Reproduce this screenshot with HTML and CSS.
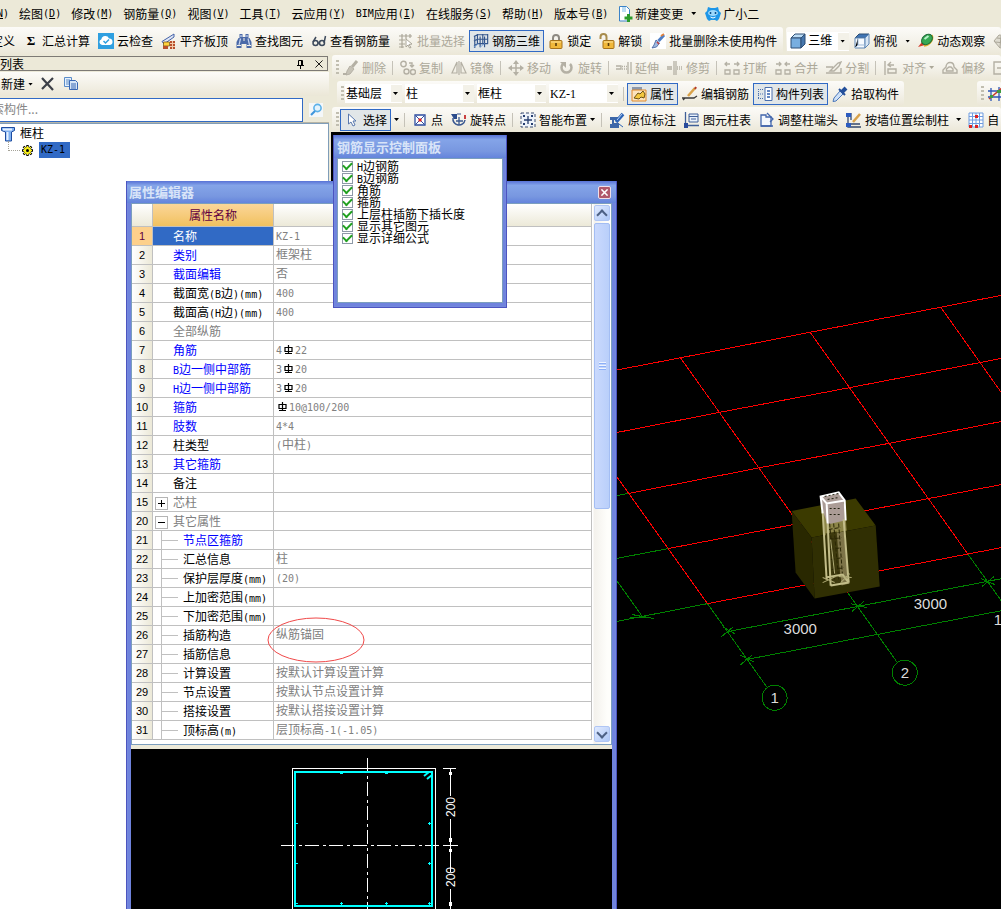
FILE: index.html
```html
<!DOCTYPE html>
<html lang="zh-CN">
<head>
<meta charset="utf-8">
<title>钢筋三维</title>
<link rel="stylesheet" href="styles.css">
</head>
<body>
<svg class="defs" aria-hidden="true">
  <symbol id="check-cloud" viewBox="0 0 16 16"><path fill="#2f9fe0" d="M0 0h16v16H0z"/><path fill="#fff" d="M4 12a3 3 0 0 1-.6-5.800A4 4 0 0 1 11 5.500 3.300 3.300 0 0 1 12 12z"/><path fill="none" stroke="#2f9fe0" stroke-width="1.500" d="M5.500 8l2 2L11 6.500"/></symbol>
  <symbol id="slab" viewBox="0 0 16 16"><path fill="#dfe6f5" stroke="#4462a8" d="M1 8.500L13 1v3L3 11z"/><path fill="#ffd23c" stroke="#6b4a12" stroke-width=".7" d="M2.500 9h6v4h-6z"/><path fill="#b8502c" d="M9 8h5v8H9zM2 13h5v3H2z"/><path stroke="#f1c9a8" d="M9 10.500h5M9 13.500h5M11.500 8v8"/></symbol>
  <symbol id="binoc" viewBox="0 0 16 16"><path fill="#4a69a8" d="M3.500 1h3v3h3V1h3v4h1l2 4v6h-5v-4h-5v4h-5V9l2-4h1z"/><path stroke="#c6d4ef" stroke-width="1.200" d="M4.500 5.500L3 12m9-6.500l1.500 6.500M5 2v2m6-2v2"/><path stroke="#f3f0e4" d="M8 5v3M1 12.500h4m6 0h4"/></symbol>
  <symbol id="glasses" viewBox="0 0 16 16"><g fill="none" stroke="#3d4a5c" stroke-width="1.500"><circle cx="4.500" cy="10" r="2.500"/><circle cx="11" cy="10" r="2.500"/><path d="M2 9l3-5M13 10l1.500-7M7 10h2"/></g></symbol>
  <symbol id="batch" viewBox="0 0 16 16"><g fill="none" stroke="#aaa698" stroke-width="1.200"><path d="M1 3h13M1 7h6M1 11h6M4 1v14M8 1v5M12 1v4M1 14h5"/></g><path fill="#fff" stroke="#aaa698" d="M8 6l6 5-3 .5 2 3-1.500.5-1.500-3-2 2z"/></symbol>
  <symbol id="grid3d" viewBox="0 0 18 18"><g fill="none" stroke="#33558c" stroke-width="1.300"><path d="M1 4l4-2h12M1 9l4-2h12M1 15l4-3h12M5 1v12M11 1v12M16.500 1v11M2 4v13M8 4v12M13 4v12"/></g><path stroke="#7aa7df" d="M1 16l5-4m2 4l5-4"/></symbol>
  <symbol id="lock" viewBox="0 0 16 16"><path fill="none" stroke="#8e8a82" stroke-width="2" d="M5 8V5a3 3 0 0 1 6 0v3"/><rect x="2" y="7.500" width="12" height="8" rx="1" fill="#f1b83a" stroke="#a5711a"/><path stroke="#fbe09a" d="M3 9h10"/><path stroke="#5b3c0b" stroke-width="1.600" d="M8 10v3"/></symbol>
  <symbol id="unlock" viewBox="0 0 16 16"><path fill="none" stroke="#a88c4c" stroke-width="2" d="M1.500 6V4a3 3 0 0 1 6 0v4"/><rect x="4" y="7.500" width="11" height="8" rx="1" fill="#f1b83a" stroke="#a5711a"/><path stroke="#fbe09a" d="M5 9h9"/><path stroke="#5b3c0b" stroke-width="1.600" d="M9.500 10v3"/></symbol>
  <symbol id="brush" viewBox="0 0 16 16"><path fill="#fff" d="M0 0h16v16H0z"/><path stroke="#4d7ec6" stroke-width="3" d="M8.500 8L14 2"/><path stroke="#e0823c" stroke-width="2" d="M11 3l3-2"/><path fill="#9fb9e0" stroke="#3c5d9c" stroke-width=".8" d="M6 7l3.500 3-3 4-4.500 1 2-3z"/><path stroke="#c83a3a" stroke-width="1.500" d="M7 9l2 2"/></symbol>
  <symbol id="cube" viewBox="0 0 16 16"><path fill="#bcdcf5" stroke="#2f4f74" d="M1 5l4-4h10l-4 4z"/><path fill="#78aee0" stroke="#2f4f74" d="M1 5h10v10H1z"/><path fill="#4777ad" stroke="#2f4f74" d="M11 5l4-4v10l-4 4z"/></symbol>
  <symbol id="topview" viewBox="0 0 16 16"><path fill="#3f74b4" stroke="#2f4f74" d="M1 5l4-4h10l-4 4z"/><path fill="#f6fafe" stroke="#5e86b4" d="M1 5h10v10H1z"/><path fill="#d7e6f5" stroke="#5e86b4" d="M11 5l4-4v10l-4 4z"/><path stroke="#9db9d8" d="M4 5v7l-3 3m3-3h7"/></symbol>
  <symbol id="orbit" viewBox="0 0 16 16"><path fill="none" stroke="#e3b22c" stroke-width="1.500" d="M14 2c2 4-1 10-8 11"/><path fill="#d43a2a" d="M0 14l4-5 3 3z"/><ellipse cx="9" cy="6.500" rx="6" ry="4.500" transform="rotate(-40 9 6.500)" fill="#35a853" stroke="#1d6b38"/><path stroke="#b6f2c7" stroke-width="2" d="M6.500 6l4-3"/></symbol>
  <symbol id="orbit-off" viewBox="0 0 16 16"><path fill="#dedbd0" stroke="#aaa698" d="M1 8l5-6 9 1v9l-8 3zM4 5l9 1M2 9l10 1M8 3l-1 11"/></symbol>
  <symbol id="doc-new" viewBox="0 0 16 16"><path fill="#fff" stroke="#3b83c8" d="M2.500.5h7l3 3V15h-10z"/><path fill="#bcdcf4" d="M5 1h4v5H5z"/><path stroke="#2c9b2c" stroke-width="3" d="M11.500 8v8M7.500 12h8"/></symbol>
  <symbol id="robot" viewBox="0 0 16 16"><path fill="#1d96e8" d="M3 1l3 1h4l3-1 1 4 2 2-1 3-1 3-2 2-2-1H6l-2 1-2-2-1-3-1-3 2-2z"/><ellipse cx="8" cy="7" rx="5" ry="3" fill="#9bd7fb"/><path stroke="#0b4f8c" stroke-width="1.500" d="M5.500 6v2m5-2v2"/><path fill="none" stroke="#fff" d="M5.500 11q2.500 2 5 0"/></symbol>
  <symbol id="erase" viewBox="0 0 16 16"><path stroke="#b4b0a4" stroke-width="3" d="M9 7l5-6"/><path fill="#c6c2b6" stroke="#b4b0a4" d="M7 6l4 3-4 5-4 1 1-4z"/><path stroke="#b4b0a4" stroke-width="2" d="M0 14h4"/></symbol>
  <symbol id="copy-off" viewBox="0 0 16 16"><g fill="none" stroke="#b4b0a4" stroke-width="1.400"><circle cx="3.500" cy="4" r="2.700"/><circle cx="6.500" cy="11.500" r="2.500"/><circle cx="13" cy="12" r="2.500"/><path d="M9 3h3v3m-2-1l2 2 2-2"/></g></symbol>
  <symbol id="mirror" viewBox="0 0 16 16"><g fill="none" stroke="#b4b0a4" stroke-width="1.200"><path d="M6 2v11H1zM10 2v11h5zM8 1v14"/></g></symbol>
  <symbol id="move" viewBox="0 0 16 16"><path stroke="#b4b0a4" stroke-width="1.500" d="M8 2v12M2 8h12"/><path fill="#b4b0a4" d="M8 0l3 4H5zM8 16l3-4H5zM0 8l4-3v6zM16 8l-4-3v6z"/></symbol>
  <symbol id="rotate" viewBox="0 0 16 16"><path fill="none" stroke="#b4b0a4" stroke-width="2.500" d="M4 4a5 5 0 1 0 7 0"/><path fill="#b4b0a4" d="M1 2h6v6z"/></symbol>
  <symbol id="extend" viewBox="0 0 16 16"><g fill="none" stroke="#b4b0a4" stroke-width="1.300"><path d="M0 6h5v3H0M12 2v12M15 2v12"/><path stroke-dasharray="1 1" d="M6 6.500h5M6 9h5"/></g></symbol>
  <symbol id="trim" viewBox="0 0 16 16"><g fill="none" stroke="#b4b0a4" stroke-width="1.300"><path d="M0 7h5M0 9h5M7 1v14M9 1v14"/><path stroke-dasharray="1 1" d="M10 7h6M10 9h6"/></g></symbol>
  <symbol id="break" viewBox="0 0 16 16"><g fill="none" stroke="#b4b0a4" stroke-width="1.300"><path d="M1 4h5M10 4h5M3 2L1 4l2 2M13 2l2 2-2 2M1 14v-4h5v4zM10 14v-4h5v4z"/></g></symbol>
  <symbol id="merge" viewBox="0 0 16 16"><g fill="none" stroke="#b4b0a4" stroke-width="1.300"><path d="M1 4h5M10 4h5M4 2l2 2-2 2M12 2l-2 2 2 2M1 14v-4h5v4zM10 14v-4h5v4z"/></g></symbol>
  <symbol id="split" viewBox="0 0 16 16"><path fill="none" stroke="#b4b0a4" stroke-width="1.400" d="M0 7h7M0 13h15V8M4 11l8-8 3-1-2 4-5 5z"/></symbol>
  <symbol id="align" viewBox="0 0 16 16"><path fill="none" stroke="#b4b0a4" stroke-width="1.400" d="M2 1v14M5 9h8v4H5zM5 5h6M8 2L5 5l3 2"/></symbol>
  <symbol id="offset" viewBox="0 0 16 16"><path fill="none" stroke="#b4b0a4" stroke-width="1.400" d="M1 13v-3l3-3c0-6 8-6 8 0l3 3v3zM4.500 11V9L7 7h2l2 2v2z"/></symbol>
  <symbol id="square-off" viewBox="0 0 16 16"><path fill="none" stroke="#b4b0a4" stroke-width="1.400" d="M8 2H1v12h7M4 8h9"/></symbol>
  <symbol id="prop" viewBox="0 0 16 16"><path fill="#8b97ab" d="M1 1h10v3H1z"/><path fill="#fbe3bd" stroke="#e08a2c" d="M1 4h14v11H1z"/><path fill="#f3c73e" stroke="#6d5314" d="M3 12l4-5 2 1 3-3 2 3-1 4-3-1-2 2z"/></symbol>
  <symbol id="editbar" viewBox="0 0 16 16"><path fill="none" stroke="#3a3a3a" stroke-width="1.300" d="M0 12h12l3-2M1 14l2-2"/><path stroke="#d9a24a" stroke-width="2.500" d="M6 10l7-8"/><path stroke="#b33a2a" stroke-width="2" d="M13 3l1-2"/></symbol>
  <symbol id="list" viewBox="0 0 16 16"><path fill="#fff" stroke="#4a6fae" d="M8 1.500h7v13H8z"/><path stroke="#4a6fae" stroke-dasharray="1 1" d="M1 3.500h6M1 8h6M1 12.500h6M1.500 3v10"/><path stroke="#3260ae" stroke-width="1.500" d="M10 5h3M10 8h3M10 11h3"/></symbol>
  <symbol id="dropper" viewBox="0 0 16 16"><path fill="#cfe1f7" stroke="#4a76b9" d="M8 5l3 3-7 7-3 .5L2 12z"/><path stroke="#24509b" stroke-width="4" d="M9.500 6.500L14 2"/><path stroke="#24509b" stroke-width="2" d="M7 3l6 6"/></symbol>
  <symbol id="axis" viewBox="0 0 16 16"><path stroke="#2c55b6" stroke-width="1.300" d="M3 2v13M11 1v14M0 5h16M0 11h16"/><path stroke="#c43a2a" stroke-width="1.500" d="M1 13L14 2"/><path fill="#3f9a3f" d="M9 4h4v3H9zM2 9h3v3H2z"/></symbol>
  <symbol id="cursor" viewBox="0 0 16 16"><path fill="#fff" stroke="#5878ae" d="M4.500 2v10l2.500-2 2 4 2-1-2-4h3z"/></symbol>
  <symbol id="point" viewBox="0 0 16 16"><path fill="#fff" stroke="#2c4ca0" stroke-width="1.300" d="M3 3h10v10H3z"/><path stroke="#2c4ca0" d="M4 4l8 8M12 4l-8 8"/><path fill="#d22" d="M6.500 6.500h3v3h-3z"/></symbol>
  <symbol id="rotpoint" viewBox="0 0 16 16"><path fill="none" stroke="#3a5890" stroke-width="1.500" d="M2 6a6 6 0 1 0 12 2"/><path stroke="#3a5890" stroke-width="1.300" d="M8 5v8M5 9h7"/><path fill="#2c4c8c" d="M0 2h6v5H3z"/><path fill="none" stroke="#3a5890" d="M6 2h4"/><path stroke="#c94040" stroke-width="2" d="M14 3v4"/></symbol>
  <symbol id="smart" viewBox="0 0 16 16"><path fill="#eef3fa" stroke="#3a4c70" stroke-dasharray="3 2" d="M1 1h14v14H1z"/><path stroke="#273f70" stroke-width="1.300" d="M8 4v8M4 8h8"/><path fill="#273f70" d="M3 3h2v2H3zM11 3h2v2h-2zM3 11h2v2H3zM11 11h2v2h-2z"/></symbol>
  <symbol id="mark" viewBox="0 0 16 16"><path fill="#3d67a8" d="M1 5h8v3H5v3h5v5H1v-4h2V8H1z"/><path stroke="#2c63b6" stroke-width="3.500" d="M7 10l7-8"/><path stroke="#bcd4f4" d="M8 8l5-6"/><path stroke="#2c63b6" d="M10 12l4 3"/></symbol>
  <symbol id="coltable" viewBox="0 0 16 16"><path fill="none" stroke="#3f5f98" stroke-width="1.300" d="M1.500 0v15M0 13.500h15"/><path fill="#e8f0fa" stroke="#3f5f98" d="M5 2h9v8H5z"/><path stroke="#3f5f98" d="M5 4.500h9M7 7h5"/><path fill="#284a9b" d="M0 11h4v5H0z"/></symbol>
  <symbol id="colend" viewBox="0 0 16 16"><path fill="#f4f8fd" stroke="#4266ac" stroke-width="1.300" d="M2 3h5v2h5v9H2z"/><path fill="none" stroke="#4266ac" stroke-width="1.300" d="M8 1l6 6-3 3M2 14h12"/></symbol>
  <symbol id="wallcol" viewBox="0 0 16 16"><path fill="none" stroke="#33486e" stroke-width="1.300" d="M2 1v14h13M5 1v7M5 12h9"/><path fill="#2c5cc0" d="M0 1h5v4H0zM0 11h5v4H0z"/><path stroke="#d9a24a" stroke-width="2.500" d="M7 10l7-8"/></symbol>
  <symbol id="dotgrid" viewBox="0 0 16 16"><path fill="#fff" stroke="#6f9ce0" d="M1 1h14v14H1zM4.500 1v14M8 1v14M11.500 1v14M1 4.500h14M1 8h14M1 11.500h14"/><path fill="#d22" d="M7 3h3v3H7zM1 13h3v3H1zM7 13h3v3H7z"/></symbol>
  <symbol id="del" viewBox="0 0 14 14"><path stroke="#3c4048" stroke-width="2.200" d="M1 1l11 12M12 1L1 12"/></symbol>
  <symbol id="copy" viewBox="0 0 16 16"><path fill="#e6f0fb" stroke="#5a8cc9" d="M1.500 1.500h7v9h-7z"/><path stroke="#5a8cc9" d="M3 4h4M3 6h4M3 8h4"/><path fill="#d6e6f8" stroke="#3a68b4" d="M6.500 4.500h6l2 2v7h-8z"/><path stroke="#3a68b4" d="M8 8h5M8 10h5M8 12h5"/></symbol>
  <symbol id="search" viewBox="0 0 14 14"><path fill="#f4f7f9" d="M0 0h14v14H0z"/><circle cx="8.500" cy="5" r="3.600" fill="#e3f3fd" stroke="#5cb1e8" stroke-width="1.600"/><path stroke="#3f96dc" stroke-width="2.200" d="M6 8l-4 4"/></symbol>
  <symbol id="pin" viewBox="0 0 9 10"><path fill="none" stroke="#000" d="M2.500 6V1.500h4V6M5.500 1v5M1 6.500h7M4.500 7v3"/></symbol>
  <symbol id="column" viewBox="0 0 14 15"><path fill="#7fb0f0" stroke="#1e4ca0" d="M.5.500h13v3l-3 1.500v9h-6V5l-4-1.500z"/><path stroke="#e4f0ff" stroke-width="2" d="M2 2.500h9M6.500 5v8"/></symbol>
  <symbol id="gear" viewBox="0 0 11 11"><path stroke="#000" stroke-width="2.400" d="M5.500 0v11M0 5.500h11M1.500 1.500l8 8M9.500 1.500l-8 8"/><circle cx="5.500" cy="5.500" r="3.600" fill="#f7ee1c"/><path stroke="#f7ee1c" d="M5.500 1v9M1 5.500h9M2 2l7 7M9 2L2 9"/><circle cx="5.500" cy="5.500" r="1.500" fill="#000"/></symbol>
  <symbol id="cross" viewBox="0 0 9 9"><path stroke="currentColor" stroke-width="var(--w)" d="M.5.500l8 8M8.500.500l-8 8"/></symbol>
  <symbol id="bar" viewBox="0 0 9 10"><path fill="none" stroke="#000" stroke-width="1.200" d="M4.500 0v9M1 2.500h7v4H1zM1 8.500h7"/></symbol>
</svg>

<div class="app">
  <nav class="menubar" aria-label="菜单">
    <a href="#"><span class="n"><u>N</u>)</span></a>
    <a href="#">绘图<span class="n">(<u>D</u>)</span></a>
    <a href="#">修改<span class="n">(<u>M</u>)</span></a>
    <a href="#">钢筋量<span class="n">(<u>Q</u>)</span></a>
    <a href="#">视图<span class="n">(<u>V</u>)</span></a>
    <a href="#">工具<span class="n">(<u>T</u>)</span></a>
    <a href="#">云应用<span class="n">(<u>Y</u>)</span></a>
    <a href="#"><span class="n">BIM</span>应用<span class="n">(<u>I</u>)</span></a>
    <a href="#">在线服务<span class="n">(<u>S</u>)</span></a>
    <a href="#">帮助<span class="n">(<u>H</u>)</span></a>
    <a href="#">版本号<span class="n">(<u>B</u>)</span></a>
    <a href="#"><svg class="ic"><use href="#doc-new"/></svg>新建变更<b class="arrow wide"></b></a>
    <a href="#"><svg class="ic"><use href="#robot"/></svg>广小二</a>
  </nav>

  <div class="toolrow">
    <div class="toolbar lead">
      <button class="btn">定义</button>
      <button class="btn"><span class="sigma">Σ</span>汇总计算</button>
      <button class="btn"><svg class="ic"><use href="#check-cloud"/></svg>云检查</button>
      <button class="btn"><svg class="ic"><use href="#slab"/></svg>平齐板顶</button>
      <button class="btn"><svg class="ic"><use href="#binoc"/></svg>查找图元</button>
      <button class="btn"><svg class="ic"><use href="#glasses"/></svg>查看钢筋量</button>
      <button class="btn off"><svg class="ic"><use href="#batch"/></svg>批量选择</button>
      <button class="btn on"><svg class="ic"><use href="#grid3d"/></svg>钢筋三维</button>
      <button class="btn"><svg class="ic"><use href="#lock"/></svg>锁定</button>
      <button class="btn"><svg class="ic"><use href="#unlock"/></svg>解锁</button>
      <button class="btn"><svg class="ic"><use href="#brush"/></svg>批量删除未使用构件</button>
    </div>
    <div class="toolbar grow">
      <div class="combo view"><svg class="ic"><use href="#cube"/></svg><select aria-label="视图模式"><option>三维</option></select></div>
      <button class="btn"><svg class="ic"><use href="#topview"/></svg>俯视<b class="arrow wide"></b></button>
      <button class="btn"><svg class="ic"><use href="#orbit"/></svg>动态观察</button>
      <button class="btn off" aria-label="旋转视图"><svg class="ic"><use href="#orbit-off"/></svg></button>
    </div>
  </div>

  <div class="work">
    <aside class="side">
      <header class="side-head"><h2>列表</h2><svg class="pin"><use href="#pin"/></svg><button class="x" aria-label="关闭"><svg><use href="#cross"/></svg></button></header>
      <div class="side-tools">
        <button class="btn">新建<b class="arrow wide"></b></button>
        <button class="btn" aria-label="删除"><svg class="ic small"><use href="#del"/></svg></button>
        <button class="btn" aria-label="复制"><svg class="ic"><use href="#copy"/></svg></button>
      </div>
      <div class="search"><input type="text" aria-label="搜索构件" placeholder="索构件..."><button aria-label="搜索"><svg class="ic small"><use href="#search"/></svg></button></div>
      <ul class="tree">
        <li><svg class="col"><use href="#column"/></svg>框柱
          <ul><li><svg class="gear"><use href="#gear"/></svg><span class="picked n">KZ-1</span></li></ul>
        </li>
      </ul>
    </aside>

    <main class="main">
      <div class="toolrow">
        <div class="toolbar grow edit">
          <i class="grip"></i>
          <button class="btn off"><svg class="ic"><use href="#erase"/></svg>删除</button><i class="sep"></i>
          <button class="btn off"><svg class="ic"><use href="#copy-off"/></svg>复制</button>
          <button class="btn off"><svg class="ic"><use href="#mirror"/></svg>镜像</button><i class="sep"></i>
          <button class="btn off"><svg class="ic"><use href="#move"/></svg>移动</button>
          <button class="btn off"><svg class="ic"><use href="#rotate"/></svg>旋转</button><i class="sep"></i>
          <button class="btn off"><svg class="ic"><use href="#extend"/></svg>延伸</button>
          <button class="btn off"><svg class="ic"><use href="#trim"/></svg>修剪</button><i class="sep"></i>
          <button class="btn off"><svg class="ic"><use href="#break"/></svg>打断</button>
          <button class="btn off"><svg class="ic"><use href="#merge"/></svg>合并</button>
          <button class="btn off"><svg class="ic"><use href="#split"/></svg>分割</button><i class="sep"></i>
          <button class="btn off"><svg class="ic"><use href="#align"/></svg>对齐<b class="arrow"></b></button>
          <button class="btn off"><svg class="ic"><use href="#offset"/></svg>偏移</button>
          <button class="btn off" aria-label="拉伸"><svg class="ic"><use href="#square-off"/></svg></button>
        </div>
      </div>
      <div class="toolrow">
        <div class="toolbar pick">
          <i class="grip"></i>
          <div class="combo w1"><select aria-label="楼层"><option>基础层</option></select></div>
          <div class="combo w2"><select aria-label="构件类型"><option>柱</option></select></div>
          <div class="combo w2"><select aria-label="构件类别"><option>框柱</option></select></div>
          <div class="combo w2"><select aria-label="构件"><option>KZ-1</option></select></div>
          <i class="sep"></i>
          <button class="btn on"><svg class="ic"><use href="#prop"/></svg>属性</button>
          <button class="btn"><svg class="ic"><use href="#editbar"/></svg>编辑钢筋</button>
          <button class="btn on"><svg class="ic"><use href="#list"/></svg>构件列表</button>
          <button class="btn"><svg class="ic"><use href="#dropper"/></svg>拾取构件</button>
        </div>
        <div class="toolbar tail"><i class="grip"></i><button class="btn" aria-label="轴线"><svg class="ic"><use href="#axis"/></svg></button></div>
      </div>
      <div class="toolrow">
        <div class="toolbar grow draw">
          <i class="grip"></i>
          <button class="btn on"><svg class="ic"><use href="#cursor"/></svg>选择</button>
          <button class="btn drop" aria-label="选择方式"><b class="arrow"></b></button><i class="sep"></i>
          <button class="btn"><svg class="ic"><use href="#point"/></svg>点</button>
          <button class="btn"><svg class="ic"><use href="#rotpoint"/></svg>旋转点</button><i class="sep"></i>
          <button class="btn"><svg class="ic"><use href="#smart"/></svg>智能布置<b class="arrow"></b></button><i class="sep"></i>
          <button class="btn"><svg class="ic"><use href="#mark"/></svg>原位标注</button>
          <button class="btn"><svg class="ic"><use href="#coltable"/></svg>图元柱表</button>
          <button class="btn"><svg class="ic"><use href="#colend"/></svg>调整柱端头</button>
          <button class="btn"><svg class="ic"><use href="#wallcol"/></svg>按墙位置绘制柱</button>
          <button class="btn drop" aria-label="绘制方式"><b class="arrow"></b></button>
          <button class="btn"><svg class="ic"><use href="#dotgrid"/></svg>自</button>
        </div>
      </div>
      <section class="canvas" aria-label="三维视图">
        <svg viewBox="331 133 670 776" preserveAspectRatio="xMinYMin slice">
          <g class="axis-red">
            <path d="M500 393L680 358.500L809.500 333L940 308L1001 296M500 456L719 413L848 388.500L978 363.500L1001 359M628 494L758 468.500L888 444L1001 422M668 549L1001 485M707 604L1001 548"/>
            <path d="M617 478L707 604M680 358.500L857 607M809.500 333L967 554.500M940 308L1001 394"/>
          </g>
          <g class="axis-green">
            <path d="M600 499L628 494M600 562L668 549M600 625L707 604M707 604L766 687M847 593L896 662M967 554.500L1001 602M600 558L642 617"/>
            <path d="M727 632L1001 579M745 660L1001 611M632 615l22 4M630 618h18M721 637l12-10M722 627l12 7M851 612l12-10M850 604l16 4M981 587l12-10M980 579l14 6M740 665l12-10M739 655l14 7"/>
            <circle cx="774" cy="698" r="12.500"/><circle cx="904" cy="673" r="12.500"/>
          </g>
          <g><path fill="#3b3a00" d="M791 511.500L855 499L875 526L811 538z"/><path fill="#292800" d="M791 511.500L811 538L814 599L795 573z"/><path fill="#302f03" d="M811 538L875 526L879 587L814 599z"/></g>
          <g>
            <path fill="#7d7448" d="M834 534l9-2 6 52-8 2z"/><path fill="#8c8548" d="M822 510l22-6 2 27-22 5z"/>
            <path fill="#3e3a0e" d="M825 534l11-2 4 53-10 3z"/>
            <path fill="#ab9c96" d="M820 497l19-4 4 8 1 20-17 4-5-14z"/>
            <path stroke="#2b2705" stroke-dasharray="4 2" d="M829 524l5 56M833 524l5 56M838 524l4 54M828 530l12-2M829 540l12-2M829 550l12-2M830 560l12-2M831 570l12-2"/>
            <path stroke="#c2bd88" stroke-width="2" fill="none" d="M822 512l4 68M827 524l3 62M843 520l5 63M830 586l18-3M825 578l17-3 6 8"/>
            <path stroke="#b0ab76" d="M822 578l12 5M822 583l13-6M838 577l13 1M840 583l9-9M830 540l4 34"/>
            <path stroke="#fff" stroke-width="2" fill="none" d="M822 514l-2-17 18-4 6 8 1 20M820 497l6 7 18-3M826 504l1 20"/>
            <path stroke="#221" stroke-dasharray="2 2" d="M824 497l14-3M827 500l11-2M829 509h11M829 515h10"/>
          </g>
          <g class="dims"><text x="783" y="634">3000</text><text x="913" y="609">3000</text><text x="993" y="625">1</text><text x="770" y="703">1</text><text x="900" y="678">2</text></g>
        </svg>
      </section>
    </main>
  </div>
</div>

<section class="window props" aria-label="属性编辑器">
  <header class="title"><h2>属性编辑器</h2><button class="close" aria-label="关闭"><svg><use href="#cross"/></svg></button></header>
  <div class="grid-box">
    <div class="table-wrap">
      <table>
        <colgroup><col class="c-no"><col class="c-name"><col></colgroup>
        <thead><tr><th></th><th class="hot">属性名称</th><th></th></tr></thead>
        <tbody>
          <tr class="sel"><th>1</th><td>名称</td><td><span class="n">KZ-1</span></td></tr>
          <tr class="blue"><th>2</th><td>类别</td><td>框架柱</td></tr>
          <tr class="blue"><th>3</th><td>截面编辑</td><td>否</td></tr>
          <tr><th>4</th><td>截面宽<span class="n">(B</span>边<span class="n">)(mm)</span></td><td><span class="n">400</span></td></tr>
          <tr><th>5</th><td>截面高<span class="n">(H</span>边<span class="n">)(mm)</span></td><td><span class="n">400</span></td></tr>
          <tr class="gray"><th>6</th><td>全部纵筋</td><td></td></tr>
          <tr class="blue"><th>7</th><td>角筋</td><td><span class="n">4</span><svg class="rb"><use href="#bar"/></svg><span class="n">22</span></td></tr>
          <tr class="blue"><th>8</th><td><span class="n">B</span>边一侧中部筋</td><td><span class="n">3</span><svg class="rb"><use href="#bar"/></svg><span class="n">20</span></td></tr>
          <tr class="blue"><th>9</th><td><span class="n">H</span>边一侧中部筋</td><td><span class="n">3</span><svg class="rb"><use href="#bar"/></svg><span class="n">20</span></td></tr>
          <tr class="blue"><th>10</th><td>箍筋</td><td><svg class="rb"><use href="#bar"/></svg><span class="n">10@100/200</span></td></tr>
          <tr class="blue"><th>11</th><td>肢数</td><td><span class="n">4*4</span></td></tr>
          <tr><th>12</th><td>柱类型</td><td><span class="n">(</span>中柱<span class="n">)</span></td></tr>
          <tr class="blue"><th>13</th><td>其它箍筋</td><td></td></tr>
          <tr><th>14</th><td>备注</td><td></td></tr>
          <tr class="gray fold"><th>15</th><td><button class="tog plus" aria-label="展开"></button>芯柱</td><td></td></tr>
          <tr class="gray fold"><th>20</th><td><button class="tog" aria-label="折叠"></button>其它属性</td><td></td></tr>
          <tr class="blue sub"><th>21</th><td>节点区箍筋</td><td></td></tr>
          <tr class="sub"><th>22</th><td>汇总信息</td><td>柱</td></tr>
          <tr class="sub"><th>23</th><td>保护层厚度<span class="n">(mm)</span></td><td><span class="n">(20)</span></td></tr>
          <tr class="sub"><th>24</th><td>上加密范围<span class="n">(mm)</span></td><td></td></tr>
          <tr class="sub"><th>25</th><td>下加密范围<span class="n">(mm)</span></td><td></td></tr>
          <tr class="sub"><th>26</th><td>插筋构造</td><td>纵筋锚固</td></tr>
          <tr class="sub"><th>27</th><td>插筋信息</td><td></td></tr>
          <tr class="sub"><th>28</th><td>计算设置</td><td>按默认计算设置计算</td></tr>
          <tr class="sub"><th>29</th><td>节点设置</td><td>按默认节点设置计算</td></tr>
          <tr class="sub"><th>30</th><td>搭接设置</td><td>按默认搭接设置计算</td></tr>
          <tr class="sub"><th>31</th><td>顶标高<span class="n">(m)</span></td><td>层顶标高<span class="n">-1(-1.05)</span></td></tr>
        </tbody>
      </table>
    </div>
    <div class="scroll"><button class="up" aria-label="向上滚动"></button><div class="thumb"></div><button class="down" aria-label="向下滚动"></button></div>
  </div>
  <div class="section-view">
    <svg viewBox="131 749 481 160" preserveAspectRatio="xMinYMin slice" role="img" aria-label="柱截面">
      <path class="white" d="M292.500 909V768.500H435.500V909M443 768.500h13M450.500 769v27M450.500 819v53M450.500 889v20M443 845.500h15"/>
      <path class="white" stroke-dasharray="14 4 3 3" d="M367.500 758V909M281 845.500H443"/>
      <path class="stirrup" d="M295 772H432V906H295zM424 776l5-4M427 779l5-4"/>
      <path class="dots" d="M340 773.500h3M385 773.500h3M295 823.500h3M295 863.500h3M428 823.500h3M428 863.500h3M340 903.500h3M385 903.500h3M341.500 902v3M386.500 902v3M295 903.500h3M428 903.500h3M429.500 822v3M429.500 862v3M429.500 902v3"/>
      <path fill="#fff" d="M449 772h3v3h-3zM449 838h3v4h-3zM449 849h3v3h-3zM449 902h3v4h-3z"/>
      <text transform="translate(455 817) rotate(-90)">200</text><text transform="translate(455 887) rotate(-90)">200</text>
    </svg>
  </div>
  <svg class="ring" viewBox="0 0 98 46"><ellipse cx="49" cy="23" rx="48" ry="22"/></svg>
</section>

<section class="window panel" aria-label="钢筋显示控制面板">
  <header class="title"><h2>钢筋显示控制面板</h2></header>
  <div class="checks">
    <label><input type="checkbox" checked><span><span class="n">H</span>边钢筋</span></label>
    <label><input type="checkbox" checked><span><span class="n">B</span>边钢筋</span></label>
    <label><input type="checkbox" checked><span>角筋</span></label>
    <label><input type="checkbox" checked><span>箍筋</span></label>
    <label><input type="checkbox" checked><span>上层柱插筋下插长度</span></label>
    <label><input type="checkbox" checked><span>显示其它图元</span></label>
    <label><input type="checkbox" checked><span>显示详细公式</span></label>
  </div>
</section>
</body>
</html>
```
FILE: styles.css
```css
* { box-sizing: border-box; }
body {
  margin: 0;
  height: 100vh;
  overflow: hidden;
  position: relative;
  background: #ece9d8;
  color: #000;
  font: 12px/16px "Noto Sans CJK SC", sans-serif;
}
.defs { display: none; }
h2 { margin: 0; font: inherit; }
button, input, select { font: inherit; color: inherit; margin: 0; padding: 0; border: 0; background: none; border-radius: 0; }
a { color: inherit; text-decoration: none; }
.n { font-family: "DejaVu Sans Mono", monospace; font-size: 10px; line-height: 10px; }

.app { height: 100%; display: flex; flex-direction: column; }

.menubar { height: 27px; flex: none; display: flex; align-items: center; gap: 10px; margin-left: -3px; overflow: hidden; white-space: nowrap; }
.menubar a { display: flex; align-items: center; }
.menubar .n { line-height: 16px; }
.ic { width: 16px; height: 16px; flex: none; margin-right: 3px; }
.ic.small { width: 14px; height: 14px; }
.menubar .ic { margin: 0 2px 0 -1px; }
.arrow { width: 5px; height: 3px; margin-left: 3px; background: currentColor; clip-path: polygon(0 0, 100% 0, 50% 100%); }
.arrow.wide { margin: 0 0 0 8px; }
.side .arrow.wide { margin-left: 3px; }

.toolrow { height: 28px; flex: none; display: flex; gap: 3px; overflow: hidden; }
.main .toolrow { height: 25px; margin-bottom: 1px; }
.toolbar { display: flex; align-items: center; background: linear-gradient(#fcfbf8, #f4f2ea 50%, #ebe7d7); border-radius: 3px; white-space: nowrap; }
.toolbar.lead { margin-left: -13px; padding-right: 2px; flex: none; }
.toolbar.grow { flex: 1; min-width: 0; overflow: hidden; }
.toolbar.edit, .toolbar.draw { margin-left: 3px; padding-left: 4px; }
.toolbar.pick { margin-left: 8px; padding: 0 1px 0 4px; flex: none; }
.toolbar.tail { margin-left: auto; padding-left: 4px; width: 24px; overflow: hidden; }
.btn { flex: none; display: flex; align-items: center; height: 22px; padding: 0 4px; }
.btn.off { color: #aca899; }
.btn.on { border: 1px solid #316ac5; background: #e1e6e8; padding: 0 3px; }
.btn.drop { padding: 0 3px; }
.btn.drop .arrow { margin: 0; }
.toolbar.draw .btn.on { margin-left: 1px; }
.sigma { width: 16px; margin-right: 3px; text-align: center; font: bold 13px/16px "Liberation Serif", serif; }
.grip { flex: none; width: 3px; height: 15px; background: repeating-linear-gradient(#c1beb0 0 2px, transparent 2px 4px); }
.sep { flex: none; width: 1px; height: 14px; margin: 0 3px 0 2px; background: #c5c2b8; }
.pick .sep { margin: 0 3px 0 5px; }

.combo { position: relative; flex: none; display: flex; align-items: center; height: 19px; background: #fff; }
.combo select { appearance: none; width: 100%; height: 19px; padding-left: 1px; outline: 0; font-family: "Liberation Serif", "Noto Sans CJK SC", serif; }
.combo::after { content: ""; position: absolute; right: 4px; top: 8px; width: 5px; height: 3px; background: #000; clip-path: polygon(0 0, 100% 0, 50% 100%); }
.combo::before { content: ""; position: absolute; right: 0; top: 1px; width: 11px; height: 17px; background: #f3f1e8; pointer-events: none; }
.combo .ic { margin: 0 1px 0 3px; }
.combo.view { width: 62px; margin: 0 1px; }
.combo.w1 { width: 57px; }
.combo.w2 { width: 69px; margin-left: 3px; }
.toolbar.pick .grip { margin-right: 1px; }

.work { flex: 1; min-height: 0; display: flex; }
.side { width: 329px; flex: none; display: flex; flex-direction: column; padding-top: 1px; }
.main { flex: 1; min-width: 0; display: flex; flex-direction: column; }

.side-head { height: 15px; flex: none; display: flex; align-items: center; border: 1px solid #7d7a75; border-left: 0; margin-right: 1px; padding-right: 4px; }
.side-head h2 { flex: 1; }
.pin { width: 9px; height: 10px; margin-right: 9px; }
.x, .close { display: flex; align-items: center; justify-content: center; }
.x { --w: 1; width: 9px; height: 9px; }
.x svg { width: 8px; height: 8px; }
.side-tools { height: 24px; flex: none; margin-top: 1px; display: flex; align-items: center; background: linear-gradient(#fcfbf8, #ebe7d7); }
.side-tools .btn:first-child { padding-left: 1px; }
.side-tools .ic { margin-right: 0; }
.search { height: 25px; flex: none; margin-top: 2px; display: flex; border-bottom: 1px solid #b8b5a6; }
.search input { flex: 1; min-width: 0; height: 24px; border: 1px solid #316ac5; border-left: 0; padding-bottom: 3px; background: #fff; text-indent: -8px; }
.search input::placeholder { color: #868686; opacity: 1; }
.search button { width: 26px; display: flex; align-items: center; justify-content: center; }
.search .ic { margin: 0; }
.tree, .tree ul { list-style: none; margin: 0; padding: 0; }
.tree { flex: 1; background: #fff; border: 1px solid #7f9db9; border-left: 0; border-bottom: 0; line-height: 18px; }
.tree .col { width: 14px; height: 15px; margin: 0 5px 0 1px; vertical-align: middle; }
.tree ul li { display: flex; align-items: center; margin-left: 8px; }
.tree ul li::before { content: ""; width: 11px; height: 9px; margin: -8px 2px 0 0; border: dotted #a5a398; border-width: 0 0 1px 1px; }
.gear { width: 11px; height: 11px; margin-right: 6px; }
.picked { background: #316ac5; line-height: 16px; padding: 0 5px 0 2px; }

.canvas { flex: 1; min-height: 0; margin-left: 2px; margin-top: -1px; background: #000; overflow: hidden; }
.canvas svg { display: block; width: 100%; height: 100%; }
.axis-red { fill: none; stroke: #f00; shape-rendering: crispEdges; }
.axis-green { fill: none; stroke: #008000; shape-rendering: crispEdges; }
.dims { fill: #dcdcdc; font: 15px "Liberation Sans", sans-serif; }

.window { position: absolute; display: flex; flex-direction: column; background: #6f83dd; border: solid #4c54c0; border-width: 0 1px 1px 1px; box-shadow: inset 0 0 0 1px #7388dc; }
.title { flex: none; display: flex; align-items: center; background: linear-gradient(#5872d6, #84a4e8 20%, #7897e0 70%, #6484dc); color: #d8e4f8; }
.title h2 { flex: 1; font-weight: bold; font-size: 13px; }
.props { left: 126px; top: 181px; bottom: 0; width: 491px; padding: 0 4px; border-bottom: 0; }
.props .title { height: 22px; margin: 0 -4px; padding: 0 5px 0 2px; }
.close { --w: 2; width: 13px; height: 13px; border: 1px solid #f0dfe8; border-radius: 2px; background: #b0596b; color: #fff; }
.close svg { width: 7px; height: 7px; }
.grid-box { flex: none; height: 542px; display: flex; background: #fff; border: 1px solid #7b9ebd; }
.table-wrap { flex: 1; min-width: 0; overflow: hidden; }
table { width: 100%; table-layout: fixed; border-collapse: separate; border-spacing: 0; }
.c-no { width: 21px; }
.c-name { width: 121px; }
th, td { height: 19px; padding: 0; border: solid #c0c0c0; border-width: 0 1px 1px 0; line-height: 18px; text-align: left; font-weight: normal; white-space: nowrap; overflow: hidden; }
thead th { height: 23px; background: linear-gradient(#fff, #ece9d8); text-align: center; color: #600040; line-height: 22px; }
thead .hot { background: linear-gradient(#fbd699, #f1c15f); }
tbody th { background: linear-gradient(90deg, #fff, #ece9d8); font: 11px/18px "Liberation Sans", sans-serif; text-align: center; }
td:nth-child(2) { padding-left: 20px; }
td:nth-child(3) { padding-left: 2px; color: #808080; line-height: 16px; padding-bottom: 2px; }
.blue td:nth-child(2) { color: #00f; }
.gray td { color: #808080; }
.sel th { background: #fdd08b; color: #600040; }
.sel td:nth-child(2) { background: #316ac5; color: #fff; }
.sub td:nth-child(2) { padding-left: 30px; background: linear-gradient(#c0c0c0, #c0c0c0) 9px 9px / 16px 1px no-repeat, linear-gradient(#c0c0c0, #c0c0c0) 8px 0 / 1px 19px no-repeat; }
.fold td:nth-child(2) { padding-left: 2px; }
.tog { width: 13px; height: 13px; margin-right: 5px; vertical-align: -2px; border: 1px solid #b5b5b5; background: linear-gradient(#000, #000) center / 7px 1px no-repeat, #fff; }
.tog.plus { background: linear-gradient(#000, #000) center / 7px 1px no-repeat, linear-gradient(#000, #000) center / 1px 7px no-repeat, #fff; }
.rb { width: 9px; height: 10px; margin: 0 2px; vertical-align: -1px; }

.scroll { width: 19px; flex: none; display: flex; flex-direction: column; gap: 2px; padding: 1px 1px 2px 2px; background: linear-gradient(90deg, #fff 1px, #f3f1ec 2px, #fefefb 80%); }
.scroll button { flex: none; height: 16px; border: 1px solid #b0c6f4; border-radius: 2px; background: linear-gradient(135deg, #e0eaff, #aec8f7); display: flex; align-items: center; justify-content: center; }
.scroll button::before { content: ""; width: 6px; height: 6px; border: solid #4d6185; border-width: 2px 0 0 2px; rotate: 45deg; margin-top: 3px; }
.scroll .down { margin-top: auto; }
.scroll .down::before { rotate: 225deg; margin: 0 0 3px; }
.thumb { height: 286px; border: 1px solid #a3bdf3; border-radius: 2px; background: repeating-linear-gradient(#eef4ff 0 1px, #8cb0f8 1px 2px, transparent 2px 3px) center / 7px 9px no-repeat, linear-gradient(90deg, #cad9fd, #b9cffa); }

.section-view { flex: 1; min-height: 0; background: #000; border-top: 4px solid #ece9d8; overflow: hidden; }
.section-view svg { display: block; width: 100%; height: 100%; }
.white { fill: none; stroke: #fff; shape-rendering: crispEdges; }
.stirrup { fill: none; stroke: #0ff; stroke-width: 2; }
.dots { stroke: #0ff; }
.section-view text { fill: #fff; font: 12px "Liberation Sans", sans-serif; }
.ring { position: absolute; left: 140px; top: 436px; width: 98px; height: 46px; fill: none; stroke: #f04848; }

.panel { left: 333px; top: 135px; width: 174px; height: 173px; padding: 0 3px 4px; }
.panel .title { height: 23px; margin: 0 -3px; padding-left: 3px; }
.checks { flex: 1; background: #fff; border: 1px solid #7b9ebd; padding: 1px 4px; }
.checks label { display: flex; align-items: center; gap: 4px; height: 12px; line-height: 12px; }
.checks input { appearance: none; flex: none; width: 11px; height: 11px; border: 1px solid #8e9aa8; background: #fff; display: grid; place-items: center; }
.checks input:checked::before { content: ""; width: 7px; height: 4px; border: solid #21a121; border-width: 0 0 2px 2px; rotate: -45deg; margin-top: -2px; }
```
